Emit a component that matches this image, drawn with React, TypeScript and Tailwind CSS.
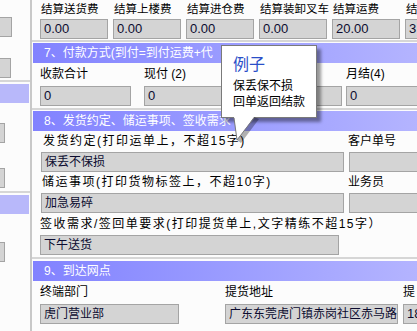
const font = "font-['Liberation_Sans','Noto_Sans_CJK_SC',sans-serif]";

const Field = ({ w, value, num }: { w: string; value?: string; num?: boolean }) => (
  <div
    className={`${w} h-[20px] shrink-0 bg-[#d4d4d4] border border-[#a4a4a4] pl-[3px] leading-[18px] text-[#0c0c30] overflow-hidden whitespace-nowrap ${
      num ? 'text-[13px]' : 'text-[12px]'
    }`}
  >
    {value}
  </div>
);

const Sep = ({ mt }: { mt: string }) => <div className={`${mt} h-[2px] bg-[#d6d6d6]`} />;

const Header = ({ mt, title }: { mt: string; title: string }) => (
  <div className={`${mt} ml-[1px] h-[20px] shrink-0 bg-gradient-to-r from-[#8282ff] to-[#b4b4ff] pl-[11px] text-[12px] leading-[20px] text-white whitespace-nowrap overflow-hidden`}>
    {title}
  </div>
);

const LeftStrip = () => (
  <div className="w-[30px] shrink-0 flex flex-col">
    <div className="mt-[17px] h-[20px] w-[12px] bg-[#d4d4d4] border border-l-0 border-[#a4a4a4]" />
    <div className="mt-[21px] h-[20px] w-[11px] bg-[#d4d4d4] border border-l-0 border-[#a4a4a4]" />
    <div className="mt-[2px] h-[2px] bg-[#d6d6d6]" />
    <div className="mt-[2px] h-[19px] w-[29px] bg-[#b8b8fa]" />
    <div className="mt-[20px] h-[20px] w-[5px] bg-[#d4d4d4] border border-l-0 border-[#a4a4a4]" />
    <div className="mt-[25px] h-[20px] w-[5px] bg-[#d4d4d4] border border-l-0 border-[#a4a4a4]" />
    <div className="mt-[3px] h-[2px] bg-[#d6d6d6]" />
    <div className="mt-[2px] h-[19px] w-[29px] bg-[#b8b8fa]" />
    <div className="mt-[28px] h-[20px] w-[5px] bg-[#d4d4d4] border border-l-0 border-[#a4a4a4]" />
  </div>
);

const fees = [
  ['结算送货费', '0.00'],
  ['结算上楼费', '0.00'],
  ['结算进仓费', '0.00'],
  ['结算装卸叉车', '0.00'],
  ['结算运费', '20.00'],
  ['结', '3'],
];

const Tooltip = () => (
  <>
    <div className="absolute left-[221px] top-[45px] w-[96px] h-[73px] bg-white border border-[#7a7a7a] shadow-[4px_4px_3px_rgba(0,0,0,0.4)] pl-[11px] pt-[9px] whitespace-nowrap">
      <div className="text-[16px] leading-[20px] text-[#2a4fc8]">例子</div>
      <div className="mt-[3px] text-[12px] leading-[16px] text-black">保丢保不损</div>
      <div className="text-[12px] leading-[16px] text-black">回单返回结款</div>
    </div>
    <svg className="absolute left-[220px] top-[117px]" width="45" height="28" viewBox="0 0 45 28">
      <polygon points="34,0 39,2 21,26 17,23" fill="rgba(0,0,0,0.3)" />
      <polygon points="14,0 34,0 17,23" fill="#fff" />
      <line x1="14" y1="1" x2="17" y2="23" stroke="#7a7a7a" strokeWidth="1" />
      <line x1="34" y1="1" x2="17" y2="23" stroke="#7a7a7a" strokeWidth="1" />
    </svg>
  </>
);

export default function App() {
  return (
    <div className={`${font} relative w-[417px] h-[331px] overflow-hidden bg-[#fcfcfc] flex text-black`}>
      <LeftStrip />
      <div className="w-[2px] shrink-0 bg-[#c8c8c8]" />
      <div className="flex-1 min-w-0 flex flex-col">
        {/* 费用 */}
        <div className="flex gap-[5px] pl-[8px] h-[19px] text-[11.5px] leading-[19px] whitespace-nowrap">
          {fees.map(([l]) => (
            <div key={l} className="w-[68px] shrink-0 pl-[1px]">{l}</div>
          ))}
        </div>
        <div className="flex gap-[5px] pl-[8px]">
          {fees.map(([l, v]) => (
            <Field key={l} w="w-[68px]" value={v} num />
          ))}
        </div>
        <Sep mt="mt-[1px]" />
        <Header mt="mt-[1px]" title="7、付款方式(到付=到付运费+代" />
        <div className="flex pl-[8px] h-[23px] text-[12px] leading-[23px] whitespace-nowrap">
          <div className="w-[104px] shrink-0">收款合计</div>
          <div className="w-[202px] shrink-0">现付 (2)</div>
          <div className="w-[80px] shrink-0">月结(4)</div>
        </div>
        <div className="flex pl-[8px]">
          <Field w="w-[91px]" value="0" num />
          <div className="w-[13px] shrink-0" />
          <Field w="w-[94px]" value="0" num />
          <div className="w-[8px] shrink-0" />
          <Field w="w-[96px]" />
          <div className="w-[4px] shrink-0" />
          <Field w="w-[90px]" value="0" num />
        </div>
        <Sep mt="mt-[2px]" />
        <Header mt="mt-[1px]" title="8、发货约定、储运事项、签收需求" />
        <div className="flex pl-[8px] h-[21px] text-[12px] leading-[21px] whitespace-nowrap">
          <div className="w-[308px] shrink-0 pl-[3px] tracking-[1.5px]">发货约定(打印运单上，不超15字)</div>
          <div className="w-[80px] shrink-0">客户单号</div>
        </div>
        <div className="flex pl-[9px] gap-[5px]">
          <Field w="w-[303px]" value="保丢不保损" />
          <Field w="w-[80px]" />
        </div>
        <div className="flex pl-[8px] h-[21px] text-[12px] leading-[21px] whitespace-nowrap">
          <div className="w-[308px] shrink-0 pl-[2px] tracking-[1.5px]">储运事项(打印货物标签上，不超10字)</div>
          <div className="w-[80px] shrink-0">业务员</div>
        </div>
        <div className="flex pl-[9px] gap-[5px]">
          <Field w="w-[303px]" value="加急易碎" />
          <Field w="w-[80px]" />
        </div>
        <div className="flex pl-[8px] h-[22px] text-[12px] leading-[22px] whitespace-nowrap tracking-[1.5px]">
          签收需求/签回单要求(打印提货单上,文字精练不超15字）
        </div>
        <div className="flex pl-[8px]">
          <Field w="w-[299px]" value="下午送货" />
        </div>
        <Sep mt="mt-[2px]" />
        <Header mt="mt-[2px]" title="9、到达网点" />
        <div className="flex pl-[8px] h-[23px] text-[12px] leading-[23px] whitespace-nowrap">
          <div className="w-[185px] shrink-0">终端部门</div>
          <div className="w-[178px] shrink-0">提货地址</div>
          <div className="w-[14px] shrink-0 overflow-hidden">提</div>
        </div>
        <div className="flex pl-[8px]">
          <Field w="w-[139px]" value="虎门营业部" />
          <div className="w-[46px] shrink-0" />
          <Field w="w-[173px]" value="广东东莞虎门镇赤岗社区赤马路" />
          <div className="w-[5px] shrink-0" />
          <Field w="w-[90px]" value="18" num />
        </div>
      </div>
      <Tooltip />
    </div>
  );
}
